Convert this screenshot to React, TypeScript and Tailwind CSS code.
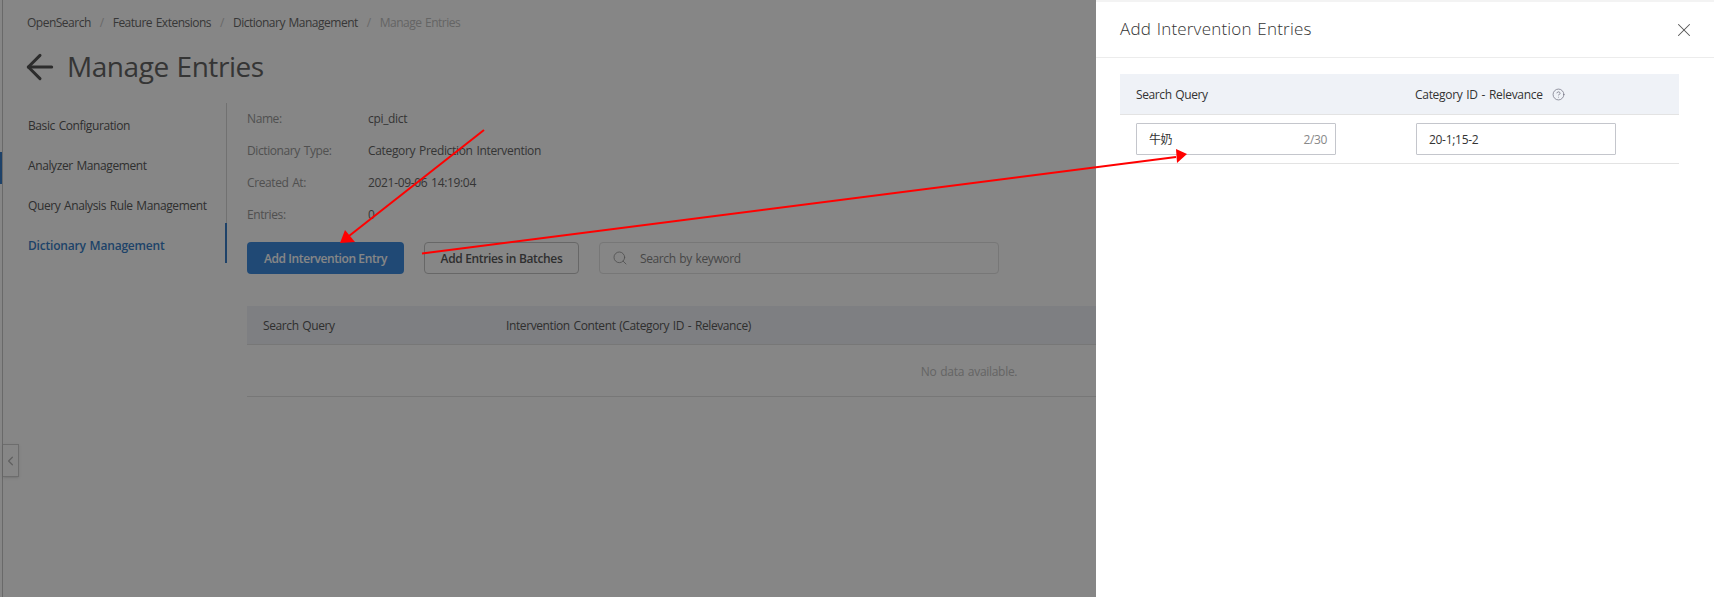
import { ArrowLeft, ChevronLeft, CircleHelp, Search, X } from "lucide-react"

const crumbs = ["OpenSearch", "Feature Extensions", "Dictionary Management"]
const navItems = ["Basic Configuration", "Analyzer Management", "Query Analysis Rule Management"]
const details = [
  ["Name:", "cpi_dict"],
  ["Dictionary Type:", "Category Prediction Intervention"],
  ["Created At:", "2021-09-06 14:19:04"],
  ["Entries:", "0"],
]

function Breadcrumb() {
  return (
    <div className="flex items-center h-[18px] text-xs text-[#6a6a6a] tracking-[-0.5px]">
      {crumbs.map((c) => (
        <span key={c} className="flex items-center">
          <span>{c}</span>
          <span className="mx-[9px] text-[#c8c8c8]">/</span>
        </span>
      ))}
      <span className="text-[#c0c0c0]">Manage Entries</span>
    </div>
  )
}

function Sidebar() {
  return (
    <div className="w-[200px] h-[160px] border-r border-[#d8d8d8] text-xs text-[#5a5a5a] shrink-0">
      {navItems.map((n) => (
        <div key={n} className="h-10 flex items-center pt-[6px] pl-px">
          {n}
        </div>
      ))}
      <div className="h-10 flex items-center pt-[6px] pl-px font-semibold tracking-[-0.2px] text-[#3a7fc8] border-r-2 border-[#3a7fc8] -mr-px">
        Dictionary Management
      </div>
    </div>
  )
}

function Content() {
  return (
    <div className="ml-[20px] w-[1444px] shrink-0 text-xs">
      {details.map(([k, v]) => (
        <div key={k} className="flex items-center h-8">
          <span className="w-[121px] text-[#999]">{k}</span>
          <span className="text-[#666] tracking-[-0.33px]">{v}</span>
        </div>
      ))}
      <div className="flex items-center gap-5 mt-[11px]">
        <button className="w-[157px] h-8 pt-[2px] rounded-sm bg-[#3e8cdf] text-white font-semibold">
          Add Intervention Entry
        </button>
        <button className="w-[155px] h-8 pt-[2px] rounded-sm border border-[#c4c4c4] text-[#5a5a5a] font-semibold tracking-[-0.35px]">
          Add Entries in Batches
        </button>
        <div className="w-[400px] h-8 rounded-sm border border-[#e2e2e2] flex items-center pl-[12px] text-[#888]">
          <Search className="w-4 h-4 text-[#999]" strokeWidth={1.25} />
          <span className="ml-3 pt-[2px]">Search by keyword</span>
        </div>
      </div>
      <div className="mt-8 h-[39px] pt-px flex items-center bg-[#eff2f7] border-b border-[#e3e3e3] text-[#5a5a5a]">
        <span className="w-[259px] pl-4">Search Query</span>
        <span>Intervention Content (Category ID - Relevance)</span>
      </div>
      <div className="h-[52px] pt-[2px] flex items-center justify-center border-b border-[#e3e3e3] text-[#c0c0c0] tracking-[-0.3px]">
        No data available.
      </div>
    </div>
  )
}

function Drawer() {
  return (
    <aside className="absolute top-0 right-0 bottom-0 w-[618px] bg-white border-t-2 border-[#f3f3f3] text-xs text-[#333]">
      <div className="h-[56px] flex items-center justify-between pl-6 pr-[19px] border-b border-[#ececec]">
        <span className="text-[17px] font-light tracking-[0.2px] text-[#333] pb-px">Add Intervention Entries</span>
        <X className="w-[22px] h-[22px] text-[#555]" strokeWidth={1.1} />
      </div>
      <div className="ml-6 mt-4 w-[559px]">
        <div className="h-[41px] pt-px flex items-center bg-[#eff2f7] border-b border-[#e3e3e3]">
          <span className="w-[295px] pl-4">Search Query</span>
          <span className="flex items-center tracking-[-0.3px]">
            Category ID - Relevance
            <CircleHelp className="w-[13px] h-[13px] ml-[9px] text-[#667]" strokeWidth={1.25} />
          </span>
        </div>
        <div className="h-[49px] flex items-center pl-4 border-b border-[#e3e3e3]">
          <div className="w-[200px] h-8 pt-px flex items-center justify-between px-3 pr-2 border border-[#c4c6cc] rounded-[1px]">
            <span>牛奶</span>
            <span className="text-[#888]">2/30</span>
          </div>
          <div className="ml-20 w-[200px] h-8 pt-px flex items-center px-3 border border-[#c4c6cc] rounded-[1px] tracking-[-0.3px]">
            20-1;15-2
          </div>
        </div>
      </div>
    </aside>
  )
}

// red annotation arrows drawn on top of the screenshot
function Arrows() {
  return (
    <svg className="absolute inset-0 pointer-events-none" width="1714" height="597" viewBox="0 0 1714 597">
      <line x1="484" y1="130" x2="349" y2="236" stroke="#ff0000" strokeWidth="2" />
      <polygon points="340,243 345,230 355,242" fill="#ff0000" />
      <line x1="422" y1="253.5" x2="1176" y2="157" stroke="#ff0000" strokeWidth="2" />
      <polygon points="1187,154 1176,149 1177,163" fill="#ff0000" />
    </svg>
  )
}

export default function App() {
  return (
    <div
      className="relative w-full h-[597px] overflow-hidden bg-white tracking-[-0.4px] [word-spacing:1px]"
      style={{ fontFamily: '"Open Sans", "Noto Sans CJK SC", sans-serif' }}
    >
      <div className="flex h-full ml-[2px] border-l border-[#c8c8c8]">
        <div className="pl-6 pt-[14px] min-w-0">
          <Breadcrumb />
          <div className="flex items-center h-10 mt-[15px] text-[#666]">
            <ArrowLeft className="w-10 h-10 -ml-[7px] shrink-0 text-[#555]" strokeWidth={1.8} />
            <h1 className="ml-[7px] text-[28px] leading-10 font-normal tracking-[-0.45px] -mt-[2px]">Manage Entries</h1>
          </div>
          <div className="flex mt-4">
            <Sidebar />
            <Content />
          </div>
        </div>
      </div>
      <div className="absolute left-[3px] top-[444px] w-4 h-[33px] flex items-center justify-center border border-l-0 border-[#d0d0d0] bg-white shadow-sm">
        <ChevronLeft className="w-4 h-4 text-[#b8b8b8]" strokeWidth={2} />
      </div>
      <div className="absolute left-0 top-[152px] w-[2px] h-8 bg-[#3a7fc8]" />
      <div className="absolute inset-0 bg-black/[0.475]" />
      <Drawer />
      <Arrows />
    </div>
  )
}
